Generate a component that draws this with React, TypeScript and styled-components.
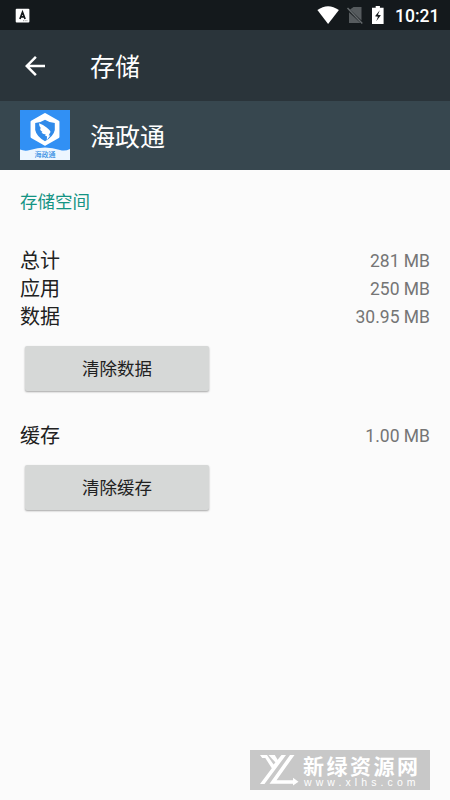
import React from "react";
import styled, { createGlobalStyle } from "styled-components";

const GlobalStyle = createGlobalStyle`
  * { box-sizing: border-box; }
  body { margin: 0; background: #fbfbfb; }
`;

const Screen = styled.div`
  position: relative;
  display: flex;
  flex-direction: column;
  width: 450px;
  height: 800px;
  overflow: hidden;
  background: #fbfbfb;
  color: #212121;
  font-family: Roboto, "Noto Sans CJK SC", sans-serif;
`;

const StatusBar = styled.header`
  display: flex;
  align-items: center;
  justify-content: space-between;
  height: 30px;
  padding: 0 11px 0 15px;
  background: #14191c;
`;

const StatusIcons = styled.div`
  display: flex;
  align-items: center;
  svg { display: block; }
`;

const Clock = styled.time`
  width: 44px;
  margin-left: 8px;
  padding-top: 2px;
  color: #fff;
  font-size: 17.5px;
  font-weight: 500;
  line-height: 28px;
  white-space: nowrap;
`;

const Toolbar = styled.nav`
  display: flex;
  align-items: center;
  height: 71px;
  padding-left: 20px;
  background: #2a343a;
`;

const BackButton = styled.button`
  display: flex;
  width: 30px;
  height: 30px;
  margin: 0 40px 0 0;
  padding: 0;
  border: 0;
  background: none;
`;

const AppHeader = styled.section`
  display: flex;
  align-items: center;
  gap: 20px;
  height: 69px;
  padding-left: 20px;
  background: #37474f;
  svg { display: block; margin-bottom: 1px; }
`;

const Title = styled.h1`
  margin: 0;
  padding-top: 5px;
  color: #fff;
  font-size: 25px;
  font-weight: 400;
  line-height: 36px;
`;

const Content = styled.main`
  display: flex;
  flex-direction: column;
  padding: 19px 20px 0;
`;

const SectionTitle = styled.h2`
  margin: 0 0 32px;
  color: #149484;
  font-size: 17.5px;
  font-weight: 400;
  line-height: 26px;
`;

const Row = styled.div`
  display: flex;
  align-items: center;
  justify-content: space-between;
  height: 28px;
`;

const Label = styled.span`
  font-size: 20px;
  line-height: 28px;
`;

const Value = styled.span`
  color: #757575;
  font-size: 17.5px;
  line-height: 28px;
`;

const ClearButton = styled.button<{ $after?: number }>`
  width: 184px;
  height: 45px;
  margin: 15px 0 ${(p) => p.$after ?? 0}px 5px;
  padding: 1px 0 0;
  border: 0;
  border-radius: 2px;
  background: #d6d8d7;
  box-shadow: 0 1px 2px rgba(0, 0, 0, 0.34);
  color: #212121;
  font: 400 17.5px/45px Roboto, "Noto Sans CJK SC", sans-serif;
`;

const Watermark = styled.aside`
  position: absolute;
  left: 250px;
  top: 750px;
  display: flex;
  width: 180px;
  height: 40px;
  padding-left: 9px;
  background: #c8c8c8;
  color: #fff;
`;

const WatermarkText = styled.div`
  display: flex;
  flex-direction: column;
  padding: 3px 0 0 4px;
`;

const SiteName = styled.strong`
  font-family: "Noto Sans CJK SC", sans-serif;
  font-size: 21px;
  font-weight: 700;
  letter-spacing: 2.5px;
  line-height: 24px;
  white-space: nowrap;
`;

const SiteUrl = styled.span`
  padding-left: 1px;
  font: 400 10.5px/11px "Liberation Sans", sans-serif;
  letter-spacing: 4.1px;
  white-space: nowrap;
`;

const InputIcon = () => (
  <svg width="15" height="15" viewBox="0 0 15 15">
    <rect x="0.7" y="0.7" width="13.7" height="13.8" rx="1" fill="#fff" />
    <path d="M4.9 11 7.5 4.2 10.1 11M5.8 8.8h3.4" fill="none" stroke="#14191c" strokeWidth="1.7" />
    <path d="M8 12.7h5" stroke="#777" strokeWidth=".8" strokeDasharray="1 .7" />
  </svg>
);

const SystemIcons = () => (
  <svg width="70" height="22" viewBox="0 0 70 22">
    <path d="M.4 6.1Q11-1.6 21.9 6.1L11.1 20Z" fill="#fff" />
    <path d="M36.5 3H44.5V16.5L33 5.5ZM32 8.3 43.5 19H32Z" fill="#565b5e" />
    <path d="m30.5 4 14.8 15.4" stroke="#656a6d" strokeWidth="1.5" />
    <path d="M58.7 2h4.2v1.8h3.7V20H55V3.8h3.7Z" fill="#fff" />
    <path d="M62.8 6.2 58 12.2l3 .5-1.8 4.6 4.7-6-3-.6Z" fill="#14191c" />
  </svg>
);

const BackIcon = () => (
  <svg width="30" height="30" viewBox="0 0 24 24">
    <path d="M20 11H7.83l5.59-5.59L12 4l-8 8 8 8 1.41-1.41L7.83 13H20z" fill="#fff" />
  </svg>
);

const AppIcon = () => (
  <svg width="50" height="50" viewBox="0 0 50 50">
    <path d="M0 0h50v50H0Z" fill="#3190f4" />
    <path d="M0 39.5Q5 41.5 10 40Q25 35 40 40Q45 41.5 50 39V50H0Z" fill="#edf6ff" />
    <path d="m25 4.3 13.2 7.5v15L25 34.5l-13.2-7.7v-15Z" fill="#fff" stroke="#fff" strokeWidth="2.5" strokeLinejoin="round" />
    <path d="M15.2 13Q20.5 12.7 25 9.7q4.5 3 9.8 3.3v7Q33.5 26.5 25 31.2q-8.5-4.7-9.8-11.2Z" fill="#318bea" />
    <path d="M19 13.2q4.2 1.4 7.6 4.2 4 3 3.9 4.5l-1.9 3.5h1.7L26.8 30l.2-3.7-1.8-.2.5-1.7q-3.3-.3-4.2-2l1-.5q-2.3-1.2-2.6-3.4h1.2Q19 16.8 19 13.2Z" fill="#fff" />
    <text x="25" y="47.3" textAnchor="middle" fontFamily="Noto Sans CJK SC, sans-serif" fontSize="7" fontWeight="500" fill="#348de3">海政通</text>
  </svg>
);

const SiteLogo = () => (
  <svg width="40" height="40" viewBox="0 0 40 40">
    <g fill="#fff">
      <path d="M1 5H8L14.6 14.6 22.5 5H27L5.5 34H1L12.8 18.3 6.3 8H3.2Z" />
      <path d="M9.5 5H15.8L19 10.4 17 13Z" />
      <path d="M31 5H35.5L17.5 30.2H34V27.8L39.5 31.8 34 35.6V33.8H10.5Z" />
    </g>
  </svg>
);

const StorageRow = ({ label, value }: { label: string; value: string }) => (
  <Row>
    <Label>{label}</Label>
    <Value>{value}</Value>
  </Row>
);

export default function App() {
  return (
    <Screen>
      <GlobalStyle />
      <StatusBar>
        <InputIcon />
        <StatusIcons>
          <SystemIcons />
          <Clock>10:21</Clock>
        </StatusIcons>
      </StatusBar>
      <Toolbar>
        <BackButton aria-label="返回"><BackIcon /></BackButton>
        <Title>存储</Title>
      </Toolbar>
      <AppHeader>
        <AppIcon />
        <Title as="h2">海政通</Title>
      </AppHeader>
      <Content>
        <SectionTitle>存储空间</SectionTitle>
        <StorageRow label="总计" value="281 MB" />
        <StorageRow label="应用" value="250 MB" />
        <StorageRow label="数据" value="30.95 MB" />
        <ClearButton $after={31}>清除数据</ClearButton>
        <StorageRow label="缓存" value="1.00 MB" />
        <ClearButton>清除缓存</ClearButton>
      </Content>
      <Watermark>
        <SiteLogo />
        <WatermarkText>
          <SiteName>新绿资源网</SiteName>
          <SiteUrl>www.xlhs.com</SiteUrl>
        </WatermarkText>
      </Watermark>
    </Screen>
  );
}
